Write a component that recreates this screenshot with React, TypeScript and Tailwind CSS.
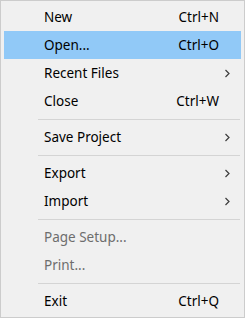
type Entry =
  | { kind: "item"; label: string; shortcut?: string; submenu?: boolean; disabled?: boolean; active?: boolean }
  | { kind: "sep" };

const entries: Entry[] = [
  { kind: "item", label: "New", shortcut: "Ctrl+N" },
  { kind: "item", label: "Open...", shortcut: "Ctrl+O", active: true },
  { kind: "item", label: "Recent Files", submenu: true },
  { kind: "item", label: "Close", shortcut: "Ctrl+W" },
  { kind: "sep" },
  { kind: "item", label: "Save Project", submenu: true },
  { kind: "sep" },
  { kind: "item", label: "Export", submenu: true },
  { kind: "item", label: "Import", submenu: true },
  { kind: "sep" },
  { kind: "item", label: "Page Setup...", disabled: true },
  { kind: "item", label: "Print...", disabled: true },
  { kind: "sep" },
  { kind: "item", label: "Exit", shortcut: "Ctrl+Q" },
];

const Chevron = () => (
  <svg width="6" height="9" viewBox="0 0 6 9" className="text-[#3c3c3c]">
    <polyline points="1.5,1 5,4.5 1.5,8" fill="none" stroke="currentColor" strokeWidth="1.2" />
  </svg>
);

export default function App() {
  return (
    <div
      className="w-[245px] h-[318px] bg-[#f0f0f0] border border-[#cccccc] py-[2px] px-[3px] text-[13.5px] text-black"
      style={{ fontFamily: '"Noto Sans", "Open Sans", sans-serif' }}
    >
      {entries.map((e, i) =>
        e.kind === "sep" ? (
          <div key={i} className="h-[8px] flex items-center pl-[34px] pr-[1px]">
            <div className="h-px w-full bg-[#d4d4d4]" />
          </div>
        ) : (
          <div
            key={i}
            className={`h-[28px] flex items-center pl-[40px] ${e.active ? "bg-[#91c9f7]" : ""} ${
              e.disabled ? "text-[#6d6d6d]" : ""
            }`}
          >
            <span className="flex-1">{e.label}</span>
            {e.shortcut && <span className="mr-[22px]">{e.shortcut}</span>}
            {e.submenu && (
              <span className="w-[22px] flex justify-start pl-[5px]">
                <Chevron />
              </span>
            )}
          </div>
        )
      )}
    </div>
  );
}
